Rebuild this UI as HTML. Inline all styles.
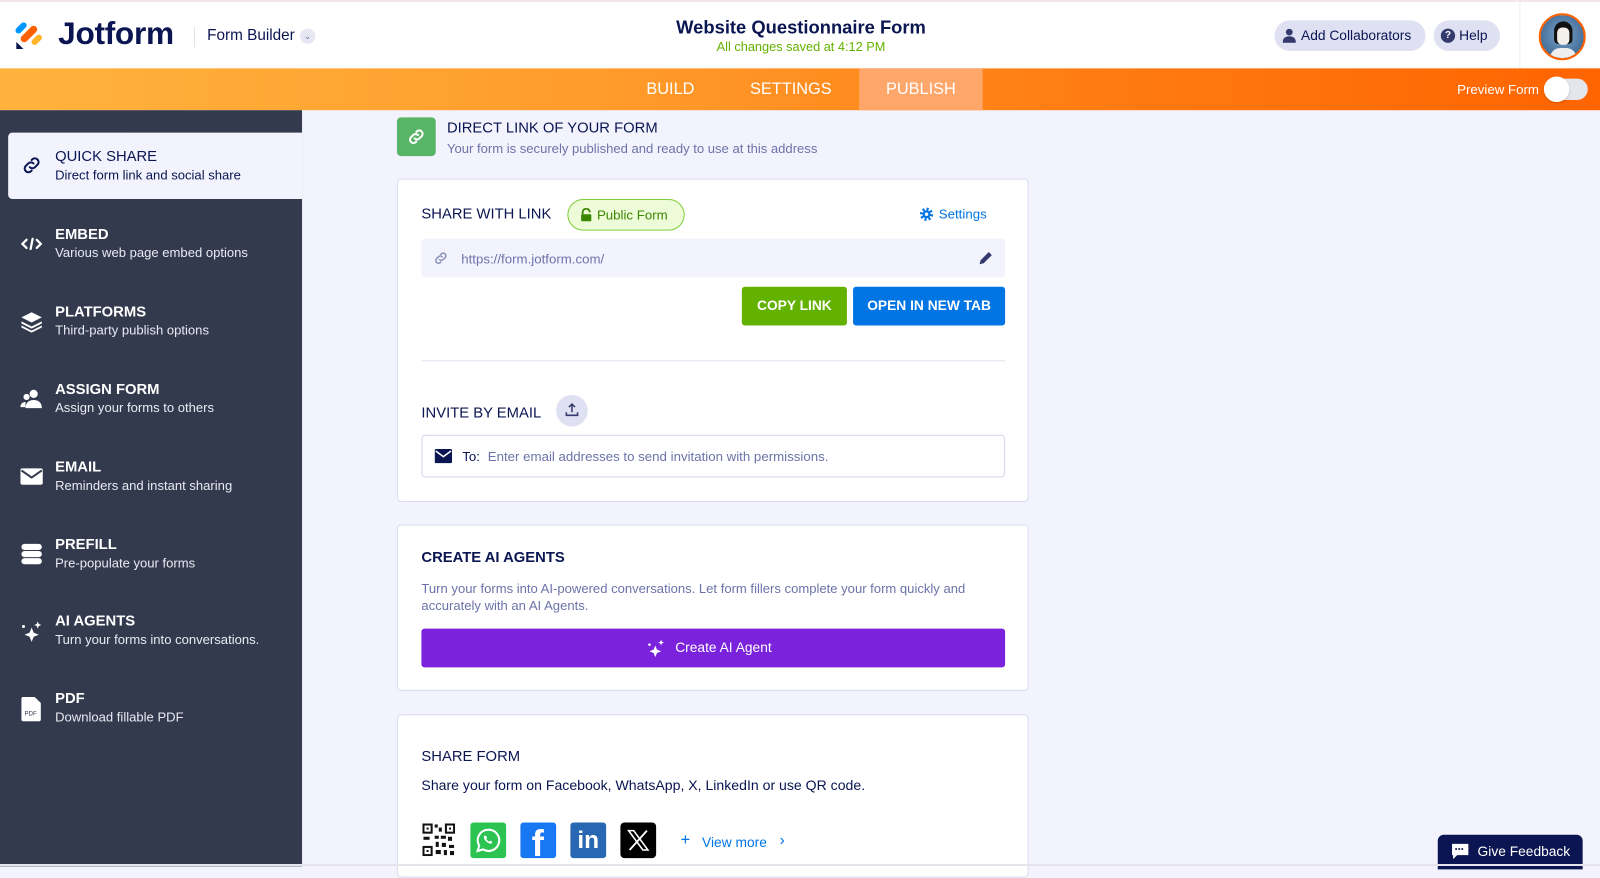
<!DOCTYPE html><html><head><meta charset="utf-8"><style>
*{box-sizing:border-box;margin:0;padding:0}
body{width:1600px;height:866px;overflow:hidden;font-family:"Liberation Sans",sans-serif;background:#f3f3fd;position:relative;color:#0a1551}
#w{position:absolute;left:0;top:0;width:1568px;height:849px;transform:scale(1.020408);transform-origin:0 0}
.abs{position:absolute}
.hdr{left:0;top:0;width:1568px;height:67px;background:#fff;border-top:2px solid #f3e6ee}
.bar{left:0;top:67px;width:1568px;height:41px;background:linear-gradient(90deg,#ffb33d,#ff9a2a 40%,#ff7a12 70%,#ff6400)}
.tab{top:67px;height:41px;line-height:41px;color:#fff;font-size:16px;text-align:center}
.side{left:0;top:108px;width:296px;height:741px;background:#343a4e}
.item{left:0;width:296px;height:65px;color:#fff}
.item .t{position:absolute;left:54px;top:3px;font-size:14.5px;font-weight:bold}
.item .s{position:absolute;left:54px;top:21px;font-size:12.8px;color:#e8eaf3}
.item svg{position:absolute;left:20px;top:9px}
.card{left:389px;width:619px;background:#fff;border:1px solid #dadcef;border-radius:4px}
.h{font-size:14.5px;font-weight:bold;color:#0a1551;position:absolute}
</style></head><body><div id="w">
<div class="abs hdr">
 <svg class="abs" style="left:15px;top:17px" width="30" height="30" viewBox="0 0 30 30"><rect x="3" y="2" width="6" height="13" rx="3" transform="rotate(45 6 8)" fill="#0099ff"/><rect x="10" y="4" width="7" height="20" rx="3.5" transform="rotate(45 13 14)" fill="#ff6100"/><rect x="18" y="14" width="6" height="12" rx="3" transform="rotate(45 21 20)" fill="#ffb629"/><path d="M1 22v7h7z" fill="#0a1551"/></svg>
 <div class="abs" style="left:57px;top:13px;font-size:31px;font-weight:bold;color:#0a1551;letter-spacing:-0.3px">Jotform</div>
 <div class="abs" style="left:190px;top:24px;width:1px;height:20px;background:#e0e2ea"></div>
 <div class="abs" style="left:203px;top:24px;font-size:15px;color:#0a1551">Form Builder</div>
 <div class="abs" style="left:294px;top:26px;width:15px;height:15px;border-radius:50%;background:#e6e7f2;font-size:9px;text-align:center;line-height:15px;color:#6c73a8">&#8964;</div>
 <div class="abs" style="left:600px;top:15px;width:370px;text-align:center;font-size:18px;font-weight:bold;color:#0a1551">Website Questionnaire Form</div>
 <div class="abs" style="left:600px;top:37px;width:370px;text-align:center;font-size:12.5px;color:#64b200">All changes saved at 4:12 PM</div>
 <div class="abs" style="left:1249px;top:18px;width:148px;height:30px;border-radius:15px;background:#dfe1f3;font-size:13.5px;line-height:30px;padding-left:26px;color:#0a1551">Add Collaborators</div>
 <svg class="abs" style="left:1257px;top:26px" width="13" height="14" viewBox="0 0 13 14"><circle cx="6.5" cy="3.5" r="3.3" fill="#343a6e"/><path d="M0 14c0-5 3-6.5 6.5-6.5S13 9 13 14z" fill="#343a6e"/></svg>
 <div class="abs" style="left:1405px;top:18px;width:65px;height:30px;border-radius:15px;background:#dfe1f3;font-size:13.5px;line-height:30px;padding-left:25px;color:#0a1551">Help</div>
 <div class="abs" style="left:1412px;top:26px;width:14px;height:14px;border-radius:50%;background:#343a6e;color:#fff;font-size:10px;font-weight:bold;text-align:center;line-height:14px">?</div>
 <div class="abs" style="left:1489px;top:0;width:1px;height:67px;background:#eceef4"></div>
 <div class="abs" style="left:1508px;top:11px;width:46px;height:46px;border-radius:50%;background:radial-gradient(circle at 50% 45%,#7fa3c7,#2b5a8a);border:2px solid #ff6100;overflow:hidden">
  <div style="position:absolute;left:13px;top:6px;width:18px;height:22px;background:#111;border-radius:9px 9px 4px 4px"></div>
  <div style="position:absolute;left:16px;top:12px;width:12px;height:17px;background:#f4f0ea;border-radius:5px"></div>
  <div style="position:absolute;left:9px;top:32px;width:26px;height:14px;background:#eee;border-radius:10px 10px 0 0"></div>
 </div>
</div>
<div class="abs bar"></div>
<div class="abs" style="left:842px;top:67px;width:121px;height:41px;background:#ffa66a"></div>
<div class="abs tab" style="left:620px;width:74px">BUILD</div>
<div class="abs tab" style="left:724px;width:102px">SETTINGS</div>
<div class="abs tab" style="left:842px;width:121px">PUBLISH</div>
<div class="abs" style="left:1428px;top:80px;font-size:13px;color:#fff">Preview Form</div>
<div class="abs" style="left:1514px;top:77px;width:42px;height:21px;border-radius:11px;background:#e5e5ec"></div>
<div class="abs" style="left:1513px;top:75px;width:25px;height:25px;border-radius:50%;background:#fff;box-shadow:0 1px 2px rgba(0,0,0,.2)"></div>

<div class="abs side"></div>
<div class="abs" style="left:8px;top:130px;width:288px;height:65px;background:#f3f3fe;border-radius:4px 0 0 4px"></div>
<div class="abs item" style="top:140px;color:#0a1551"><svg style="top:11px" width="22" height="22" viewBox="0 0 24 24" fill="none" stroke="#0a1551" stroke-width="2.2" stroke-linecap="round"><path d="M10 14a4 4 0 0 0 5.6 0l3-3a4 4 0 0 0-5.6-5.6l-1 1"/><path d="M14 10a4 4 0 0 0-5.6 0l-3 3a4 4 0 0 0 5.6 5.6l1-1"/></svg><div class="t" style="top:6px;font-weight:normal;font-size:14.5px">QUICK SHARE</div><div class="s" style="top:24px;color:#0a1551">Direct form link and social share</div></div>
<div class="abs item" style="top:219px"><svg width="22" height="22" viewBox="0 0 22 22" fill="none" stroke="#fff" stroke-width="2.2" stroke-linecap="round"><path d="M6 7l-4 4 4 4M16 7l4 4-4 4M12 6l-2 10"/></svg><div class="t">EMBED</div><div class="s">Various web page embed options</div></div>
<div class="abs item" style="top:295px"><svg width="22" height="22" viewBox="0 0 22 22" fill="#fff"><path d="M11 2l10 5-10 5L1 7z"/><path d="M1 11l10 5 10-5v2l-10 5-10-5z"/><path d="M1 15l10 5 10-5v2l-10 5-10-5z"/></svg><div class="t">PLATFORMS</div><div class="s">Third-party publish options</div></div>
<div class="abs item" style="top:371px"><svg width="22" height="22" viewBox="0 0 22 22" fill="#fff"><circle cx="13" cy="6" r="4"/><path d="M5 20c0-6 4-8 8-8s8 2 8 8z"/><circle cx="6" cy="9" r="3"/><path d="M0 19c0-4 3-5 5-5v5z"/></svg><div class="t">ASSIGN FORM</div><div class="s">Assign your forms to others</div></div>
<div class="abs item" style="top:447px"><svg width="22" height="22" viewBox="0 0 22 22" fill="#fff"><rect x="0" y="3" width="22" height="16" rx="2"/><path d="M1 5l10 7 10-7" stroke="#343a4e" stroke-width="2" fill="none"/></svg><div class="t">EMAIL</div><div class="s">Reminders and instant sharing</div></div>
<div class="abs item" style="top:523px"><svg width="22" height="22" viewBox="0 0 22 22" fill="#fff"><rect x="1" y="1" width="20" height="6" rx="3"/><rect x="1" y="8" width="20" height="6" rx="3"/><rect x="1" y="15" width="20" height="6" rx="3"/></svg><div class="t">PREFILL</div><div class="s">Pre-populate your forms</div></div>
<div class="abs item" style="top:598px"><svg width="22" height="22" viewBox="0 0 22 22" fill="#fff"><path d="M11 8l2 5 5 2-5 2-2 5-2-5-5-2 5-2z"/><path d="M17 2l1 2.5 2.5 1-2.5 1-1 2.5-1-2.5-2.5-1 2.5-1z"/><circle cx="3" cy="7" r="1.5"/></svg><div class="t">AI AGENTS</div><div class="s">Turn your forms into conversations.</div></div>
<div class="abs item" style="top:674px"><svg width="22" height="24" viewBox="0 0 22 24" fill="#fff"><path d="M3 0h11l6 6v16a2 2 0 0 1-2 2H3a2 2 0 0 1-2-2V2a2 2 0 0 1 2-2z"/><text x="4" y="18" font-size="6" fill="#343a4e" font-family="Liberation Sans">PDF</text></svg><div class="t">PDF</div><div class="s">Download fillable PDF</div></div>

<div class="abs" style="left:389px;top:115px;width:38px;height:38px;border-radius:4px;background:#58b467"></div>
<svg class="abs" style="left:398px;top:124px" width="20" height="20" viewBox="0 0 24 24" fill="none" stroke="#fff" stroke-width="2.4" stroke-linecap="round"><path d="M10 14a4 4 0 0 0 5.6 0l3-3a4 4 0 0 0-5.6-5.6l-1 1"/><path d="M14 10a4 4 0 0 0-5.6 0l-3 3a4 4 0 0 0 5.6 5.6l1-1"/></svg>
<div class="abs" style="left:438px;top:118px;font-size:14.5px;color:#0a1551">DIRECT LINK OF YOUR FORM</div>
<div class="abs" style="left:438px;top:138px;font-size:12.8px;color:#6c73a8">Your form is securely published and ready to use at this address</div>

<div class="abs card" style="top:175px;height:317px">
 <div class="h" style="left:23px;top:26px;font-weight:normal">SHARE WITH LINK</div>
 <div class="abs" style="left:166px;top:19px;width:115px;height:31px;border-radius:16px;background:#edfbd8;border:1px solid #7fce3a;font-size:13px;color:#3b8702;line-height:29px;padding-left:28px">Public Form</div>
 <svg class="abs" style="left:179px;top:28px" width="11" height="13" viewBox="0 0 11 13"><path d="M2 6V4a3.5 3.5 0 0 1 7 0" stroke="#3b8702" stroke-width="1.8" fill="none"/><rect x="0.5" y="6" width="10" height="7" rx="1" fill="#3b8702"/></svg>
 <svg class="abs" style="left:511px;top:27px" width="14" height="14" viewBox="0 0 14 14"><circle cx="7" cy="7" r="5" fill="none" stroke="#0075e3" stroke-width="3" stroke-dasharray="2 1.9"/><circle cx="7" cy="7" r="4" fill="#0075e3"/><circle cx="7" cy="7" r="1.7" fill="#fff"/></svg>
 <div class="abs" style="left:530px;top:26px;font-size:13px;color:#0075e3">Settings</div>
 <div class="abs" style="left:23px;top:58px;width:572px;height:38px;background:#f3f3fe;border-radius:4px"></div>
 <svg class="abs" style="left:34px;top:69px" width="16" height="16" viewBox="0 0 24 24" fill="none" stroke="#8a8fb8" stroke-width="2.2" stroke-linecap="round"><path d="M10 14a4 4 0 0 0 5.6 0l3-3a4 4 0 0 0-5.6-5.6l-1 1"/><path d="M14 10a4 4 0 0 0-5.6 0l-3 3a4 4 0 0 0 5.6 5.6l1-1"/></svg>
 <div class="abs" style="left:62px;top:70px;font-size:13px;color:#6c73a8">https://form.jotform.com/</div>
 <svg class="abs" style="left:568px;top:69px" width="16" height="16" viewBox="0 0 16 16"><path d="M2 14l1-4 8-8 3 3-8 8z" fill="#343a6e"/></svg>
 <div class="abs" style="left:337px;top:105px;width:103px;height:38px;background:#64b200;border-radius:3px;color:#fff;font-size:13.5px;font-weight:bold;text-align:center;line-height:38px">COPY LINK</div>
 <div class="abs" style="left:446px;top:105px;width:149px;height:38px;background:#0075e3;border-radius:3px;color:#fff;font-size:13.5px;font-weight:bold;text-align:center;line-height:38px">OPEN IN NEW TAB</div>
 <div class="abs" style="left:23px;top:177px;width:572px;height:1px;background:#e3e5f0"></div>
 <div class="h" style="left:23px;top:221px;font-weight:normal">INVITE BY EMAIL</div>
 <div class="abs" style="left:155px;top:211px;width:31px;height:31px;border-radius:50%;background:#dfe1f3"></div>
 <svg class="abs" style="left:163px;top:218px" width="15" height="15" viewBox="0 0 15 15" fill="none" stroke="#343a6e" stroke-width="1.5"><path d="M7.5 10V2M4.5 5l3-3 3 3M2 10v3h11v-3"/></svg>
 <div class="abs" style="left:23px;top:250px;width:572px;height:42px;border:1px solid #d3d6ee;border-radius:4px"></div>
 <svg class="abs" style="left:36px;top:264px" width="17" height="14" viewBox="0 0 17 14"><rect width="17" height="14" rx="1.5" fill="#0a1551"/><path d="M1 2l7.5 5.5L16 2" stroke="#fff" stroke-width="1.5" fill="none"/></svg>
 <div class="abs" style="left:63px;top:264px;font-size:13px;color:#0a1551">To:</div>
 <div class="abs" style="left:88px;top:264px;font-size:13px;color:#6c73a8">Enter email addresses to send invitation with permissions.</div>
</div>

<div class="abs card" style="top:514px;height:163px">
 <div class="h" style="left:23px;top:24px">CREATE AI AGENTS</div>
 <div class="abs" style="left:23px;top:53px;width:575px;font-size:12.8px;line-height:17px;color:#6c73a8">Turn your forms into AI-powered conversations. Let form fillers complete your form quickly and accurately with an AI Agents.</div>
 <div class="abs" style="left:23px;top:101px;width:572px;height:38px;background:#7b22dc;border-radius:3px;color:#fff;font-size:13.5px;text-align:center;line-height:38px;padding-left:20px">Create AI Agent</div>
 <svg class="abs" style="left:244px;top:111px" width="18" height="18" viewBox="0 0 22 22" fill="#fff"><path d="M10 8l2 5 5 2-5 2-2 5-2-5-5-2 5-2z"/><path d="M17 1l1 2.5 2.5 1-2.5 1-1 2.5-1-2.5-2.5-1 2.5-1z"/><circle cx="3" cy="7" r="1.5"/></svg>
</div>

<div class="abs card" style="top:700px;height:160px">
 <div class="h" style="left:23px;top:33px;font-weight:normal">SHARE FORM</div>
 <div class="abs" style="left:23px;top:61px;font-size:13.8px;color:#0a1551">Share your form on Facebook, WhatsApp, X, LinkedIn or use QR code.</div>
 <svg class="abs" style="left:24px;top:106px" width="32" height="32" viewBox="0 0 32 32" fill="#111"><rect x="0" y="0" width="10" height="10"/><rect x="2" y="2" width="6" height="6" fill="#fff"/><rect x="4" y="4" width="2" height="2"/><rect x="22" y="0" width="10" height="10"/><rect x="24" y="2" width="6" height="6" fill="#fff"/><rect x="26" y="4" width="2" height="2"/><rect x="0" y="22" width="10" height="10"/><rect x="2" y="24" width="6" height="6" fill="#fff"/><rect x="4" y="26" width="2" height="2"/><rect x="12" y="1" width="3" height="3"/><rect x="16" y="4" width="3" height="4"/><rect x="12" y="12" width="4" height="3"/><rect x="18" y="12" width="5" height="3"/><rect x="25" y="13" width="4" height="4"/><rect x="1" y="13" width="6" height="3"/><rect x="13" y="18" width="3" height="5"/><rect x="19" y="19" width="4" height="4"/><rect x="26" y="21" width="5" height="3"/><rect x="13" y="26" width="5" height="4"/><rect x="21" y="26" width="3" height="5"/><rect x="27" y="27" width="4" height="4"/></svg>
 <div class="abs" style="left:71px;top:105px;width:35px;height:35px;background:#2cc353;border-radius:3px"></div>
 <svg class="abs" style="left:76px;top:110px" width="25" height="25" viewBox="0 0 24 24"><path d="M12 2a10 10 0 0 0-8.6 15L2 22l5.2-1.4A10 10 0 1 0 12 2z" fill="none" stroke="#fff" stroke-width="2"/><path d="M8.5 7.5c-.5.5-1 1.5-.3 3s2.5 3.5 4.5 4.3 2.3.3 3-.5l-.3-1.2-1.8-.8-.8 1c-1-.4-2.2-1.5-2.7-2.6l.8-.9-.8-1.9z" fill="#fff"/></svg>
 <div class="abs" style="left:120px;top:105px;width:35px;height:35px;background:#1877f2;border-radius:3px;overflow:hidden"><div style="position:absolute;left:11px;top:3px;color:#fff;font-size:36px;font-weight:bold;line-height:36px">f</div></div>
 <div class="abs" style="left:169px;top:105px;width:35px;height:35px;background:#2867b2;border-radius:3px;color:#fff;font-size:24px;font-weight:bold;text-align:center;line-height:36px">in</div>
 <div class="abs" style="left:218px;top:105px;width:35px;height:35px;background:#000;border-radius:4px"></div>
 <svg class="abs" style="left:224px;top:111px" width="23" height="23" viewBox="0 0 23 23"><path d="M2 2h5l14 19h-5z" fill="none" stroke="#fff" stroke-width="1.5"/><path d="M20 2L3 21" stroke="#fff" stroke-width="1.8"/></svg>
 <div class="abs" style="left:277px;top:115px;font-size:16px;color:#0075e3;line-height:16px">+</div>
 <div class="abs" style="left:298px;top:117px;font-size:13.5px;color:#0075e3">View more</div>
 <div class="abs" style="left:374px;top:114px;font-size:15px;color:#0075e3">&#8250;</div>
</div>

<div class="abs" style="left:1409px;top:818px;width:142px;height:34px;background:#0a1551;border-radius:6px 6px 0 0;color:#fff;font-size:13.5px;line-height:33px;padding-left:39px">Give Feedback</div>
<svg class="abs" style="left:1422px;top:826px" width="18" height="17" viewBox="0 0 18 17"><path d="M1 1h16v11H6l-4 4v-4H1z" fill="#fff"/><circle cx="5" cy="6" r="1" fill="#0a1551"/><circle cx="8" cy="6" r="1" fill="#0a1551"/><circle cx="11" cy="6" r="1" fill="#0a1551"/></svg>
</div>
<div class="abs" style="left:0;top:864px;width:1600px;height:2px;background:#e4e4ea"></div>
</body></html>
